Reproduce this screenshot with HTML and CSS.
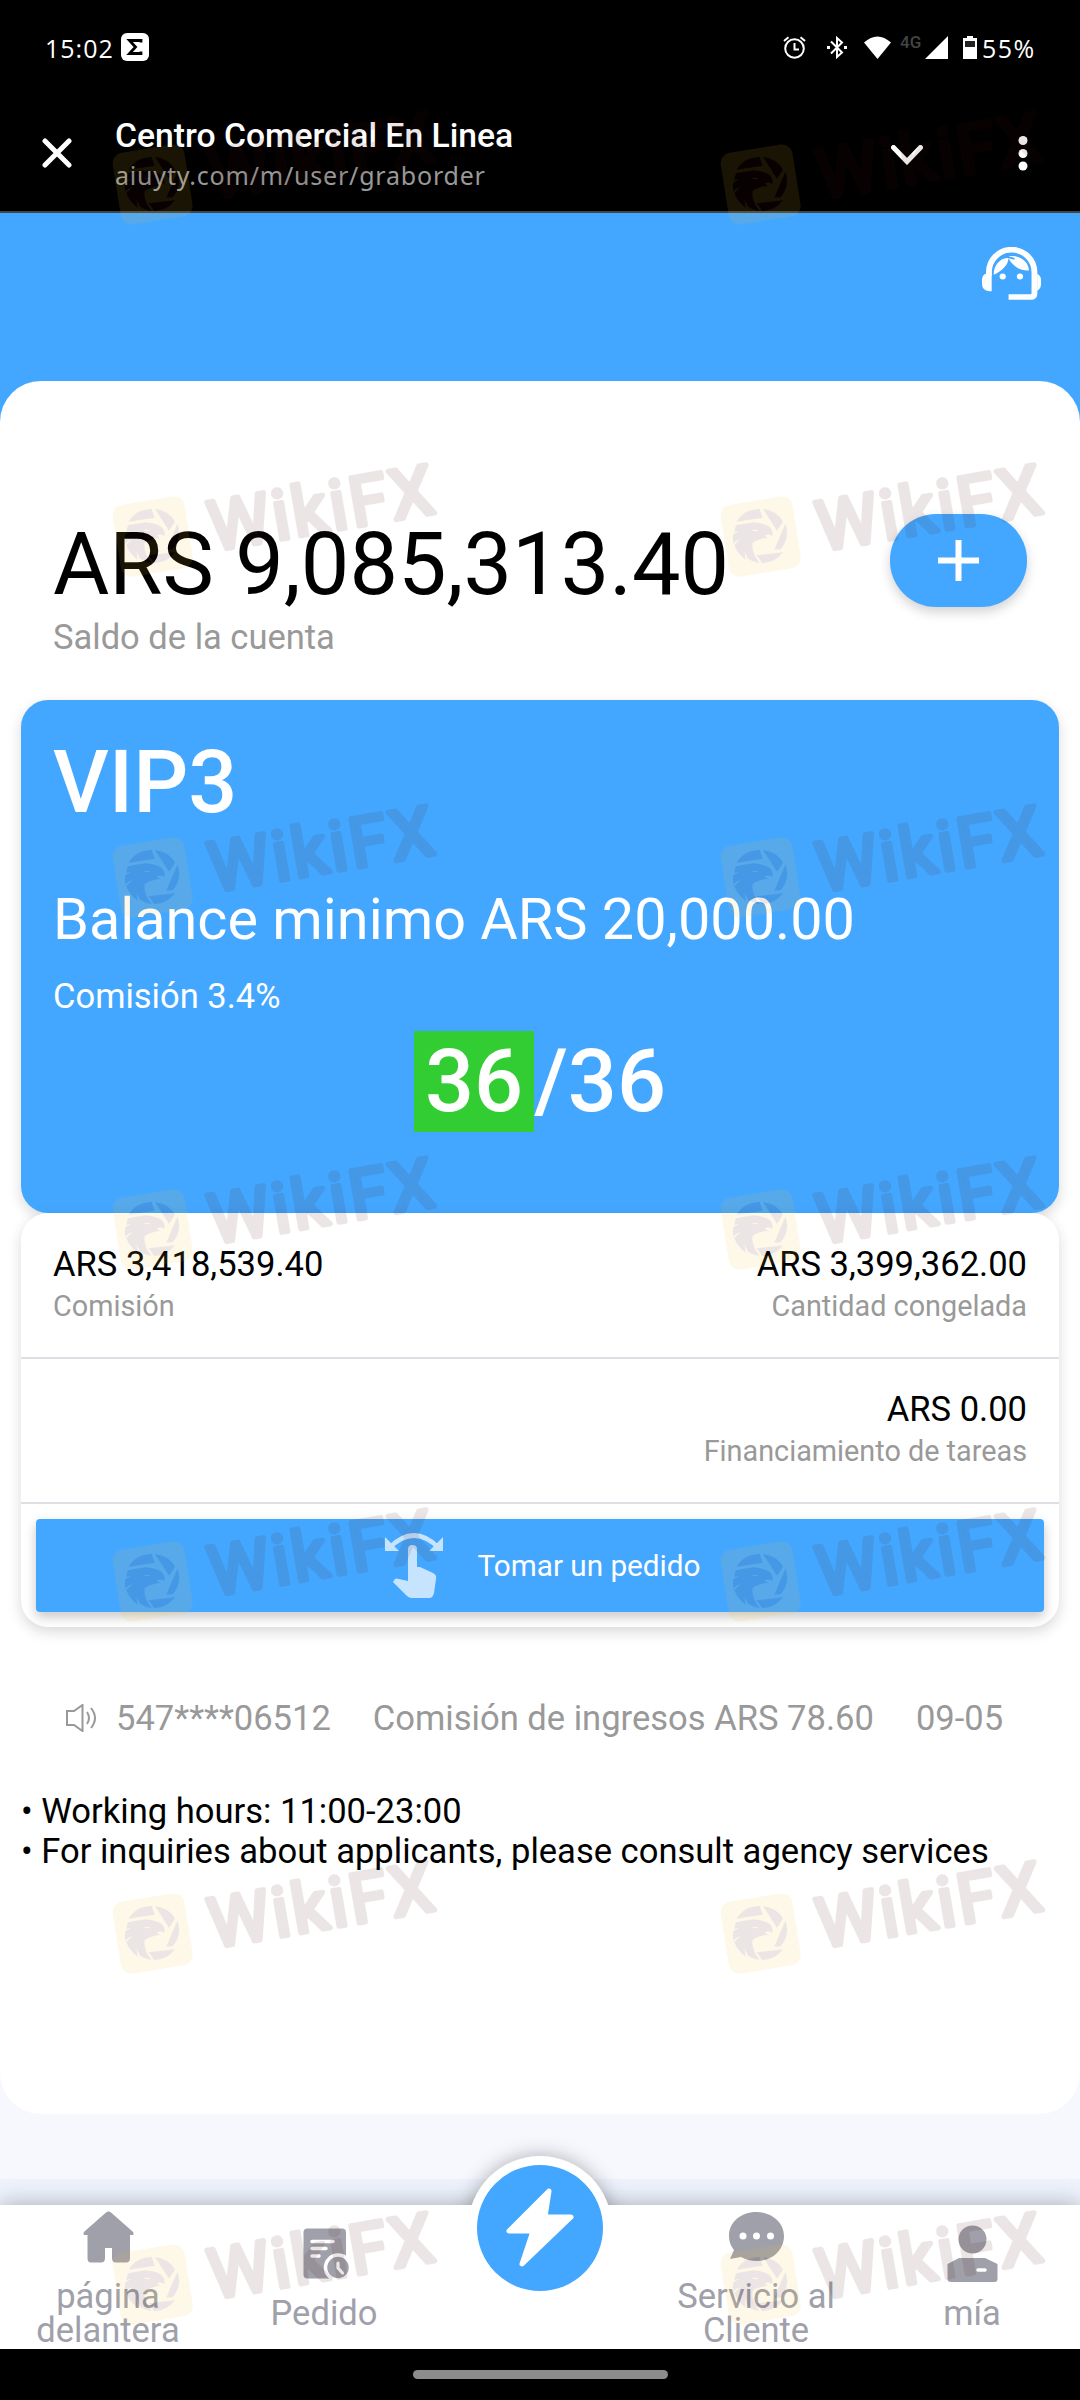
FILE: index.html
```html
<!DOCTYPE html>
<html lang="es">
<head>
    <meta charset="UTF-8">
    <meta name="viewport" content="width=device-width, initial-scale=1.0">
    <title>Centro Comercial En Linea</title>
    <link rel="stylesheet" href="styles.css">
</head>
<body>
    <header class="top">
        <div class="status-bar">
            <span class="clock">15:02</span>
            <svg class="app-badge" viewBox="0 0 28 28"><rect width="28" height="28" rx="6" fill="#fff"/><path d="M20 9.500V7.500H8.500L14.500 14L8.500 20.500H20V18.500" fill="none" stroke="#000" stroke-width="2.800"/></svg>
            <div class="status-icons">
                <svg class="alarm" viewBox="0 0 23 23" fill="none" stroke="#fff" stroke-width="2"><circle cx="11.500" cy="12.500" r="9.300"/><path d="M11.500 7V13.500H16M1 5L5.500 1.200M22 5L17.500 1.200"/></svg>
                <svg class="bluetooth" viewBox="0 0 20 23" fill="none" stroke="#fff" stroke-width="2"><path d="M4 5.500L15 16.500L10 21V2L15 6.500L4 17.500"/><path d="M0 11.500h3M17 11.500h3" stroke-width="3"/></svg>
                <svg class="wifi" viewBox="0 0 27 23" fill="#fff"><path d="M0 6.500Q13.500 -5.500 27 6.500L13.500 23Z"/></svg>
                <span class="network">4G</span>
                <svg class="signal" viewBox="0 0 23 23" fill="#fff"><path d="M23 0V23H0Z"/></svg>
                <svg class="battery" viewBox="0 0 14 23"><path d="M4 0h6v2h4v21H0V2h4z" fill="#fff"/><path d="M2 5h10v6H2z" fill="#222"/></svg>
                <span class="percent">55%</span>
            </div>
        </div>
        <div class="app-bar">
            <svg class="close" viewBox="0 0 30 30"><path d="M3 3L27 27M27 3L3 27" stroke="#fff" stroke-width="5" stroke-linecap="round"/></svg>
            <div class="page-name">
                <h1>Centro Comercial En Linea</h1>
                <p>aiuyty.com/m/user/graborder</p>
            </div>
            <svg class="chevron" viewBox="0 0 32 20"><path d="M2.500 2.500L16 16.500L29.500 2.500" fill="none" stroke="#fff" stroke-width="5" stroke-linecap="round"/></svg>
            <svg class="dots" viewBox="0 0 10 36" fill="#fff"><circle cx="5" cy="5.500" r="4.500"/><circle cx="5" cy="18.500" r="4.500"/><circle cx="5" cy="31" r="4.500"/></svg>
        </div>
    </header>

    <main>
        <div class="hero">
            <svg class="agent" viewBox="0 0 171 158" preserveAspectRatio="none" fill="#fff">
                <path d="M20 86V75A65 66 0 0 1 152 75V138Q152 149 142 149H77" fill="none" stroke="#fff" stroke-width="17"/>
                <path d="M28 76V132H21Q0 130 0 108V96Q2 82 12 80ZM160 80Q171 86 171 98V112Q170 126 160 130Z"/>
                <path d="M34 83C33 55 52 32 77 33C76 56 55 73 34 83Z"/>
                <path d="M77 33C102 44 101 30 77 28C112 22 136 47 136 70C108 72 85 53 77 33Z"/>
                <circle cx="60" cy="88" r="9"/><circle cx="110" cy="88" r="9"/>
            </svg>
        </div>

        <div class="sheet">
            <section class="balance">
                <div>
                    <p class="amount">ARS 9,085,313.40</p>
                    <p class="caption">Saldo de la cuenta</p>
                </div>
                <button class="add"><svg viewBox="0 0 41 41"><path d="M20.500 0V41M0 20.500H41" stroke="#fff" stroke-width="6"/></svg></button>
            </section>

            <section class="vip">
                <h2>VIP3</h2>
                <p class="minimum">Balance minimo ARS 20,000.00</p>
                <p class="rate">Comisión 3.4%</p>
                <p class="progress"><span>36</span>/36</p>
            </section>

            <section class="details">
                <div class="row">
                    <div>
                        <p class="value">ARS 3,418,539.40</p>
                        <p class="label">Comisión</p>
                    </div>
                    <div class="right">
                        <p class="value">ARS 3,399,362.00</p>
                        <p class="label">Cantidad congelada</p>
                    </div>
                </div>
                <div class="row second">
                    <div class="right">
                        <p class="value">ARS 0.00</p>
                        <p class="label">Financiamiento de tareas</p>
                    </div>
                </div>
                <button class="take">
                    <svg viewBox="0 0 58 65" fill="#fff">
                        <path d="M4 15Q29 -10 54 15" fill="none" stroke="#fff" stroke-width="4.500"/>
                        <path d="M0 4V18H14ZM58 4V18H44Z"/>
                        <path d="M23 16Q23 12 27.500 12T32 16V34H35L48 40Q52 42 51 46L49 60Q48 65 44 65H27Q24 65 22 63L8 49L10 46Q11 45 14 46L23 48Z"/>
                    </svg>
                    <span>Tomar un pedido</span>
                </button>
            </section>

            <div class="notice">
                <svg viewBox="0 0 31 28" fill="none" stroke="#999" stroke-width="2"><path d="M1 7H8L16.500 1V27L8 21H1ZM21 8Q25 14 21 20M25 4Q33 14 25 24"/></svg>
                <span class="user">547****06512</span>
                <span class="income">Comisión de ingresos ARS 78.60</span>
                <span class="date">09-05</span>
            </div>

            <div class="info">
                <p>• Working hours: 11:00-23:00</p>
                <p>• For inquiries about applicants, please consult agency services</p>
            </div>
        </div>
        <div class="strip"></div>
    </main>

    <nav>
        <a class="tab">
            <svg viewBox="0 0 55 55" fill="#a0a0aa"><path d="M25 4.500Q27.500 2.500 30 4.500L51 23Q53.500 25 52 27H49V50Q49 54.500 45 54.500H35Q31 54.500 31 50V40H24V50Q24 54.500 20 54.500H10Q6.500 54.500 6.500 50V27H3Q1.500 25 4 23Z"/></svg>
            <span>página<br>delantera</span>
        </a>
        <a class="tab">
            <svg viewBox="0 0 55 55"><rect x="6.500" y="3.500" width="42.500" height="50" rx="4" fill="#a0a0aa"/><path d="M15 16.500H36M15 23.500H29M15 31H22" stroke="#fff" stroke-width="3.500" stroke-linecap="round"/><circle cx="41" cy="42.500" r="12.500" fill="#a0a0aa" stroke="#fff" stroke-width="3.500"/><path d="M41 38V43L45.500 48" fill="none" stroke="#fff" stroke-width="3.200" stroke-linecap="round"/></svg>
            <span>Pedido</span>
        </a>
        <a class="tab main-tab">
            <div class="bump"></div>
            <div class="disc"><svg viewBox="0 0 72 84"><path d="M45 5L5 45H29L18 78L67 31H41L45 5Z" fill="#fff" stroke="#fff" stroke-width="5" stroke-linejoin="round"/></svg></div>
        </a>
        <a class="tab">
            <svg viewBox="0 0 55 55"><path d="M27.500 4C42 4 55 14 55 28S43 53 28 53Q19 53 12 49L1 51L5 42Q0 36 0 28C0 14 12 4 27.500 4Z" fill="#a0a0aa"/><g fill="#fff"><circle cx="14" cy="28" r="3.500"/><circle cx="27.500" cy="28" r="3.500"/><circle cx="41.500" cy="28" r="3.500"/></g></svg>
            <span>Servicio al<br>Cliente</span>
        </a>
        <a class="tab">
            <svg viewBox="0 0 55 55" fill="#a0a0aa"><circle cx="27.500" cy="14.500" r="14"/><path d="M2.500 39L14 33H40L52.500 39V54Q52.500 57 49.500 57H6Q2.500 57 2.500 54Z"/><path d="M33 45H40" stroke="#fff" stroke-width="3.500" stroke-linecap="round"/></svg>
            <span>mía</span>
        </a>
    </nav>

    <footer><div class="home-bar"></div></footer>

    <svg class="watermarks" viewBox="0 0 1080 2400">
        <defs>
            <g id="mark" opacity="0.1">
                <g transform="scale(0.3333)">
                    <rect x="37" y="30.500" width="218" height="218" rx="32" fill="#fac032" transform="rotate(-9 146 139.500)"/>
                    <g fill="#46190f">
                        <path d="M74 95Q96 58 143 57L152 83ZM153 57Q195 62 213 95L195 122ZM220 101Q236 142 206 178L187 179ZM134 196L213 187Q190 218 151 220Z"/>
                        <path d="M72 106Q104 100 126 97Q170 102 178 118Q184 128 181 138Q170 130 158 136L170 146Q135 145 122 160Q118 180 134 207L143 219Q120 216 107 205L98 182L101 209Q75 190 67 165L84 148Q70 152 65 162Q60 145 65 132L82 122L66 126Z"/>
                    </g>
                    <path d="M119 119L139 120Q130 128 119 119ZM149 145Q172 142 168 148Z" fill="#fac032"/>
                </g>
                <text x="109" y="61" font-size="69" textLength="227" fill="#46190f" stroke="#46190f" stroke-width="5" stroke-linejoin="round" transform="rotate(-9.700 109 61)">WikiFX</text>
            </g>
        </defs>
        <use href="#mark" x="104" y="138"/><use href="#mark" x="712" y="138"/>
        <use href="#mark" x="104" y="490"/><use href="#mark" x="712" y="490"/>
        <use href="#mark" x="104" y="831"/><use href="#mark" x="712" y="831"/>
        <use href="#mark" x="104" y="1183"/><use href="#mark" x="712" y="1183"/>
        <use href="#mark" x="104" y="1535"/><use href="#mark" x="712" y="1535"/>
        <use href="#mark" x="104" y="1887"/><use href="#mark" x="712" y="1887"/>
        <use href="#mark" x="104" y="2238"/><use href="#mark" x="712" y="2238"/>
    </svg>
</body>
</html>
```
FILE: styles.css
```css
* {
    box-sizing: border-box;
}

body {
    margin: 0;
    width: 1080px;
    height: 2400px;
    position: relative;
    overflow: hidden;
    display: flex;
    flex-direction: column;
    background-color: #f6f8fd;
    font-family: Roboto, Arial, sans-serif;
    color: #000;
}

h1, h2, p {
    margin: 0;
    font-weight: 400;
}

svg {
    display: block;
    flex: none;
}

button {
    border: none;
    padding: 0;
    font-family: inherit;
    color: #fff;
    background-color: #44a7ff;
}

/* barra superior */
.top {
    height: 213px;
    background-color: #000;
    border-bottom: 2px solid #444;
    color: #fff;
}

.status-bar {
    display: flex;
    align-items: center;
    height: 94px;
    padding: 0 45px;
    font-family: "Open Sans", "Noto Sans", sans-serif;
    font-size: 25px;
    font-weight: 400;
}

.clock {
    width: 76px;
    letter-spacing: 1px;
    padding-top: 1px;
}

.app-badge {
    width: 28px;
    height: 28px;
}

.status-icons {
    margin-left: auto;
    display: flex;
    align-items: center;
}

.alarm {
    width: 23px;
    height: 23px;
    margin-right: 21px;
}

.bluetooth {
    width: 20px;
    height: 23px;
    margin-right: 17px;
}

.wifi {
    width: 27px;
    height: 23px;
    margin-right: 9px;
}

.network {
    font-family: Roboto, sans-serif;
    font-size: 17px;
    font-weight: 500;
    line-height: 17px;
    color: #444;
    width: 25px;
    margin-bottom: 10px;
}

.signal {
    width: 23px;
    height: 23px;
    margin-right: 15px;
}

.battery {
    width: 14px;
    height: 23px;
    margin-right: 5px;
}

.percent {
    width: 53px;
    letter-spacing: 1.5px;
    padding-top: 1px;
}

.app-bar {
    display: flex;
    align-items: flex-start;
    padding: 20px 52px 0 42px;
}

.close {
    width: 30px;
    height: 30px;
    margin-top: 24px;
}

.page-name {
    margin-left: 43px;
    margin-right: auto;
}

.page-name h1 {
    font-size: 33.7px;
    font-weight: 500;
    line-height: 43px;
}

.page-name p {
    font-family: "Noto Sans", sans-serif;
    font-size: 25px;
    line-height: 36px;
    letter-spacing: 0.8px;
    color: #999;
}

.chevron {
    width: 32px;
    height: 20px;
    margin-top: 31px;
    margin-right: 95px;
}

.dots {
    width: 10px;
    height: 36px;
    margin-top: 21px;
}

.hero {
    height: 228px;
    padding: 34px 39px;
    background-color: #44a7ff;
}

.agent {
    width: 59px;
    height: 53px;
    margin-left: auto;
}

.sheet {
    height: 1733px;
    margin-top: -60px;
    padding: 133px 21px 0;
    border-radius: 41px;
    background-color: #fff;
}

.balance {
    display: flex;
    justify-content: space-between;
    height: 186px;
    padding: 0 32px;
}

.amount {
    font-size: 86.4px;
    line-height: 101px;
}

.caption {
    margin-top: 2px;
    font-size: 34.5px;
    line-height: 41px;
    color: #999;
}

.add {
    display: flex;
    align-items: center;
    justify-content: center;
    width: 137px;
    height: 93px;
    border-radius: 46px;
    box-shadow: 0 5px 12px rgba(0, 0, 0, 0.18);
}

.add svg {
    width: 41px;
    height: 41px;
}

.vip {
    height: 513px;
    padding: 32px 32px 0;
    border-radius: 27px;
    background-color: #44a7ff;
    color: #fff;
    box-shadow: 0 5px 14px rgba(0, 0, 0, 0.15);
}

.vip h2 {
    font-size: 86.4px;
    font-weight: 500;
    line-height: 102px;
}

.minimum {
    margin-top: 52px;
    font-size: 57.6px;
    line-height: 68px;
}

.rate {
    margin-top: 21px;
    font-size: 34.5px;
    line-height: 42px;
}

.progress {
    margin-top: 13px;
    font-size: 86.4px;
    font-weight: 500;
    line-height: 103px;
    text-align: center;
}

.progress span {
    padding: 0 11px;
    background-color: #32cd32;
}

.details {
    border-radius: 27px;
    background-color: #fff;
    box-shadow: 0 5px 14px rgba(0, 0, 0, 0.15);
    padding-bottom: 15px;
}

.row {
    display: flex;
    justify-content: space-between;
    height: 146px;
    padding: 30px 32px 0;
    border-bottom: 2px solid #dcdfe3;
}

.row.second {
    height: 145px;
    padding-top: 29px;
}

.right {
    margin-left: auto;
    text-align: right;
}

.value {
    font-size: 34.55px;
    line-height: 42px;
}

.label {
    margin-top: 3px;
    font-size: 28.8px;
    line-height: 36px;
    color: #999;
}

.take {
    display: flex;
    align-items: center;
    justify-content: center;
    width: 1008px;
    height: 93px;
    margin: 15px 15px 0;
    padding-left: 5px;
    border-radius: 4px;
    box-shadow: 0 5px 12px rgba(0, 0, 0, 0.22);
    font-size: 29.7px;
}

.take svg {
    width: 58px;
    height: 65px;
    margin-right: 35px;
    opacity: 0.7;
}

.notice {
    display: flex;
    align-items: center;
    margin-top: 70px;
    padding-left: 45px;
    font-size: 34.55px;
    line-height: 42px;
    color: #999;
}

.notice svg {
    width: 31px;
    height: 28px;
    margin-right: 19px;
}

.notice .income {
    margin: 0 42px;
}

.info {
    margin-top: 52px;
    font-size: 34.55px;
    line-height: 40px;
    white-space: nowrap;
}

.strip {
    height: 26px;
    margin-top: 65px;
    background-color: #edf2fc;
}

/* menu inferior */
nav {
    display: flex;
    height: 144px;
    background-color: #fff;
    box-shadow: 0 0 22px rgba(0, 0, 0, 0.3);
}

.tab {
    width: 216px;
    display: flex;
    flex-direction: column;
    align-items: center;
    justify-content: center;
    text-align: center;
    font-size: 34.5px;
    line-height: 34px;
    color: #a0a0aa;
}

.tab > svg {
    width: 55px;
    height: 55px;
    margin-bottom: 16px;
    overflow: visible;
}

.main-tab {
    position: relative;
}

/* circulo blanco que sobresale del menu */
.bump {
    position: absolute;
    top: -49px;
    left: 36px;
    width: 144px;
    height: 144px;
    border-radius: 50%;
    background-color: #fff;
    box-shadow: 0 0 20px rgba(0, 0, 0, 0.3);
    clip-path: inset(-30px -30px 95px -30px);
}

.disc {
    position: absolute;
    top: -40px;
    left: 45px;
    width: 126px;
    height: 126px;
    border-radius: 50%;
    background-color: #44a7ff;
    display: flex;
    align-items: center;
    justify-content: center;
}

.disc svg {
    width: 72px;
    height: 84px;
}

footer {
    height: 51px;
    padding-top: 21px;
    background-color: #000;
    position: relative;
}

.home-bar {
    width: 255px;
    height: 9px;
    margin: 0 auto;
    border-radius: 5px;
    background-color: #8c8c8c;
}

.watermarks {
    position: absolute;
    top: 0;
    left: 0;
    width: 1080px;
    height: 2400px;
    pointer-events: none;
    font-family: Roboto, Arial, sans-serif;
    font-weight: 400;
}
```
